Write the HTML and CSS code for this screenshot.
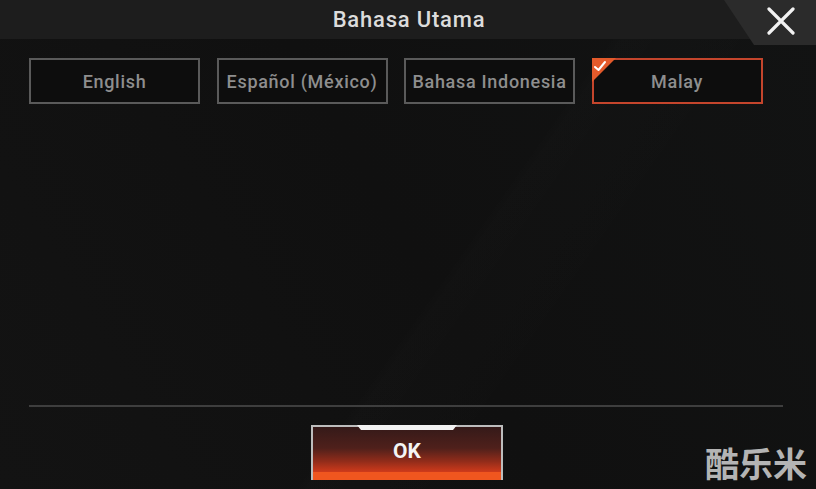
FILE: index.html
```html
<!DOCTYPE html>
<html lang="ms">
<head>
  <meta charset="UTF-8" />
  <meta name="viewport" content="width=device-width, initial-scale=1.0"/>
  <title>Bahasa Utama</title>
  <link rel="stylesheet" href="styles.css">
</head>
<body>

  <div class="dialog">
    <div class="header">
      <h1>Bahasa Utama</h1>
      <button class="close-button" aria-label="Tutup">
        <svg width="28" height="28" viewBox="0 0 28 28">
          <path d="M2 2 L26 26 M26 2 L2 26" stroke="#f2f2f2" stroke-width="3.2" stroke-linecap="round"/>
        </svg>
      </button>
    </div>

    <div class="options">
      <div class="option">English</div>
      <div class="option">Español (México)</div>
      <div class="option">Bahasa Indonesia</div>
      <div class="option selected">
        <span class="check">
          <svg width="24" height="24" viewBox="0 0 24 24">
            <path d="M0 0 H24 L0 24 Z" fill="#e35a2b"/>
            <path d="M3 9 L6.5 12 L13 4" stroke="#fff" stroke-width="2" fill="none" stroke-linecap="round" stroke-linejoin="round"/>
          </svg>
        </span>
        Malay
      </div>
    </div>

    <div class="spacer"></div>

    <div class="divider"></div>

    <div class="actions">
      <button class="ok-button">OK</button>
    </div>
  </div>

  <div class="watermark">酷乐米</div>

</body>
</html>
```

FILE: styles.css
```css
:root {
  --accent: #f0561f;
  --border-grey: #5a5a5a;
  --text-grey: #8e8e8e;
}

* {
  box-sizing: border-box;
  margin: 0;
  padding: 0;
}

body, html {
  width: 816px;
  height: 489px;
  overflow: hidden;
  font-family: Roboto, "Liberation Sans", sans-serif;
  background: #111212;
  color: #fff;
}

.dialog {
  height: 100%;
  display: flex;
  flex-direction: column;
  background:
    linear-gradient(125deg, transparent 55%, rgba(255,255,255,0.006) 56%, transparent 70%),
    linear-gradient(60deg, #131313 0%, #101010 50%, #121313 100%);
}

.header {
  position: relative;
  height: 39px;
  display: flex;
  justify-content: center;
  align-items: center;
  background: #1d1d1d;
}

h1 {
  font-size: 22px;
  font-weight: 500;
  color: #dcdcdc;
  letter-spacing: 0.8px;
  margin-left: 2px;
}

.close-button {
  position: absolute;
  top: 0;
  right: 0;
  width: 92px;
  height: 45px;
  border: none;
  background: #2b2b2b;
  clip-path: polygon(0 0, 100% 0, 100% 100%, 30px 100%);
  display: flex;
  align-items: center;
  justify-content: flex-end;
  padding-right: 21px;
  padding-bottom: 3px;
}

.options {
  display: flex;
  gap: 16.5px;
  padding: 0 29px;
  margin-top: 19px;
}

.option {
  position: relative;
  width: 171px;
  height: 46px;
  border: 2px solid var(--border-grey);
  display: flex;
  align-items: center;
  justify-content: center;
  font-size: 18px;
  font-weight: 500;
  letter-spacing: 0.7px;
  color: var(--text-grey);
  background: #0d0d0d;
}

.option.selected {
  border-color: #c4452c;
}

.check {
  position: absolute;
  top: -2px;
  left: -2px;
  line-height: 0;
}

.spacer {
  flex: 1;
}

.divider {
  height: 2px;
  margin: 0 33px 0 29px;
  background: #3e3e3e;
}

.actions {
  display: flex;
  justify-content: center;
  padding: 18px 0 9px;
  margin-right: 2px;
}

.ok-button {
  position: relative;
  width: 192px;
  height: 55px;
  border: 2px solid #bdbdbd;
  border-bottom: none;
  background: linear-gradient(to bottom, #351a19 0%, #4f201b 40%, #922c1a 65%, #cc3a1b 84%, var(--accent) 85%, var(--accent) 100%);
  color: #f4f4f4;
  font-family: Roboto, sans-serif;
  font-size: 21px;
  font-weight: bold;
  padding-bottom: 6px;
}

.ok-button::before {
  content: '';
  position: absolute;
  top: -2px;
  left: 44px;
  width: 100px;
  height: 5px;
  background: #f2f2f2;
  clip-path: polygon(0 0, 100% 0, 96% 100%, 4% 100%);
}

.watermark {
  position: absolute;
  right: 9px;
  bottom: 9px;
  font-family: "Noto Sans CJK SC", sans-serif;
  font-weight: bold;
  font-size: 34px;
  line-height: 1;
  color: #b4b4b4;
}
```
